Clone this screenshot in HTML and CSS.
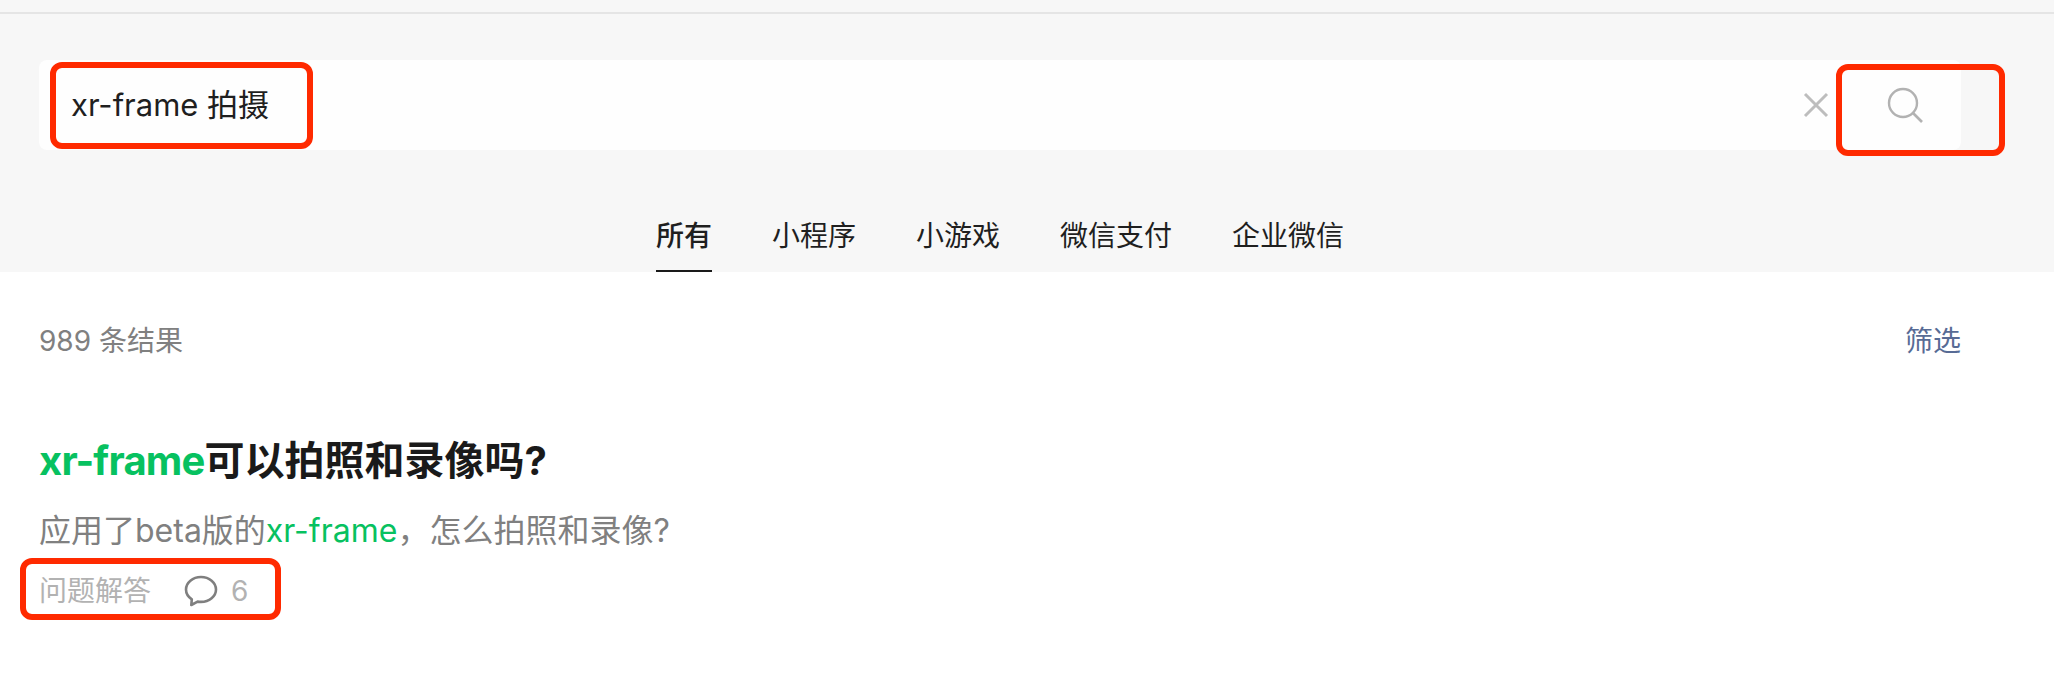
FILE: index.html
```html
<!DOCTYPE html>
<html lang="zh-CN">
<head>
<meta charset="utf-8">
<title>xr-frame 拍摄</title>
<link rel="stylesheet" href="styles.css">
</head>
<body>
<header class="head">
  <div class="search">
    <span class="query">xr-frame 拍摄</span>
    <svg class="clear" width="26" height="26" viewBox="0 0 26 26" aria-hidden="true"><path d="M2 2 24 24M24 2 2 24" stroke="#bdbdbd" stroke-width="3" fill="none"/></svg>
    <span class="go">
      <svg width="40" height="40" viewBox="0 0 40 40" aria-hidden="true"><circle cx="18" cy="18" r="14" stroke="#b2b2b2" stroke-width="2.400" fill="none"/><path d="M28 28 37 37" stroke="#b2b2b2" stroke-width="2.600" fill="none"/></svg>
    </span>
  </div>
  <nav class="tabs">
    <span class="tab active">所有</span>
    <span class="tab">小程序</span>
    <span class="tab">小游戏</span>
    <span class="tab">微信支付</span>
    <span class="tab">企业微信</span>
  </nav>
</header>
<main class="main">
  <div class="summary">
    <span class="count">989 条结果</span>
    <span class="filter">筛选</span>
  </div>
  <article class="result">
    <h2 class="title"><em class="hit tight">xr-frame</em>可以拍照和录像吗?</h2>
    <p class="desc">应用了beta版的<em class="hit">xr-frame</em>，怎么拍照和录像?</p>
    <div class="meta">
      <span>问题解答</span>
      <span class="comments">
        <svg width="34" height="32" viewBox="0 0 34 32" aria-hidden="true"><path d="M17 2C8.700 2 2 7.600 2 14.500c0 4 2.300 7.500 5.800 9.800l-.5 5.700 6.300-3.400c1.100.2 2.200.3 3.400.3 8.300 0 15-5.600 15-12.400S25.300 2 17 2Z" stroke="#7f7f7f" stroke-width="2.600" fill="none" stroke-linejoin="round"/></svg>
        <span class="num">6</span>
      </span>
    </div>
  </article>
</main>
<div class="mark mark-query"></div>
<div class="mark mark-go"></div>
<div class="mark mark-meta"></div>
</body>
</html>
```
FILE: styles.css
```css
* { box-sizing: border-box; }
html, body { margin: 0; padding: 0; }
body {
  position: relative;
  width: 2054px;
  height: 690px;
  overflow: hidden;
  background: #fff;
  font-family: Inter, "Noto Sans CJK SC", sans-serif;
  color: #1a1a1a;
}
.head {
  height: 272px;
  padding: 60px 93px 0 39px;
  background: #f7f7f7;
  box-shadow: inset 0 12px 0 #f7f7f7, inset 0 14px 0 #e5e5e5;
  display: flex;
  flex-direction: column;
}
.search {
  height: 90px;
  display: flex;
  align-items: center;
  background: #fefefe;
  border-radius: 8px;
  padding-left: 32px;
}
.query { flex: 1; font-size: 31px; line-height: 42px; color: #1f1f1f; }
.clear { margin-right: 20px; }
.go { width: 112px; display: flex; justify-content: center; }
.tabs {
  margin-top: 66px;
  padding-left: 617px;
  display: flex;
  gap: 60px;
  flex: 1;
}
.tab {
  font-size: 28px;
  line-height: 40px;
  color: #1f1f1f;
}
.active { font-weight: 500; border-bottom: 2px solid #1a1a1a; }
.main { padding: 49px 93px 0 39px; }
.summary {
  display: flex;
  justify-content: space-between;
  font-size: 28px;
  line-height: 40px;
}
.count { color: #808080; }
.filter { color: #576b95; }
.result { margin-top: 72px; }
.title {
  margin: 0;
  font-size: 40px;
  line-height: 56px;
  font-weight: 700;
}
.hit { font-style: normal; color: #07c160; }
.tight { letter-spacing: -.8px; }
.desc {
  margin: 20px 0 0;
  font-size: 32px;
  line-height: 44px;
  color: #808080;
}
.meta {
  margin-top: 18px;
  display: flex;
  align-items: center;
  font-size: 28px;
  line-height: 40px;
  color: #b2b2b2;
}
.comments { margin-left: 33px; display: flex; align-items: center; gap: 13px; }
.num { font-size: 28px; }
.mark {
  position: absolute;
  border: 6px solid #ff2a00;
  border-radius: 12px;
}
.mark-query { left: 50px; top: 62px; width: 263px; height: 87px; }
.mark-go { left: 1836px; top: 64px; width: 169px; height: 92px; }
.mark-meta { left: 20px; top: 558px; width: 261px; height: 62px; }
```
